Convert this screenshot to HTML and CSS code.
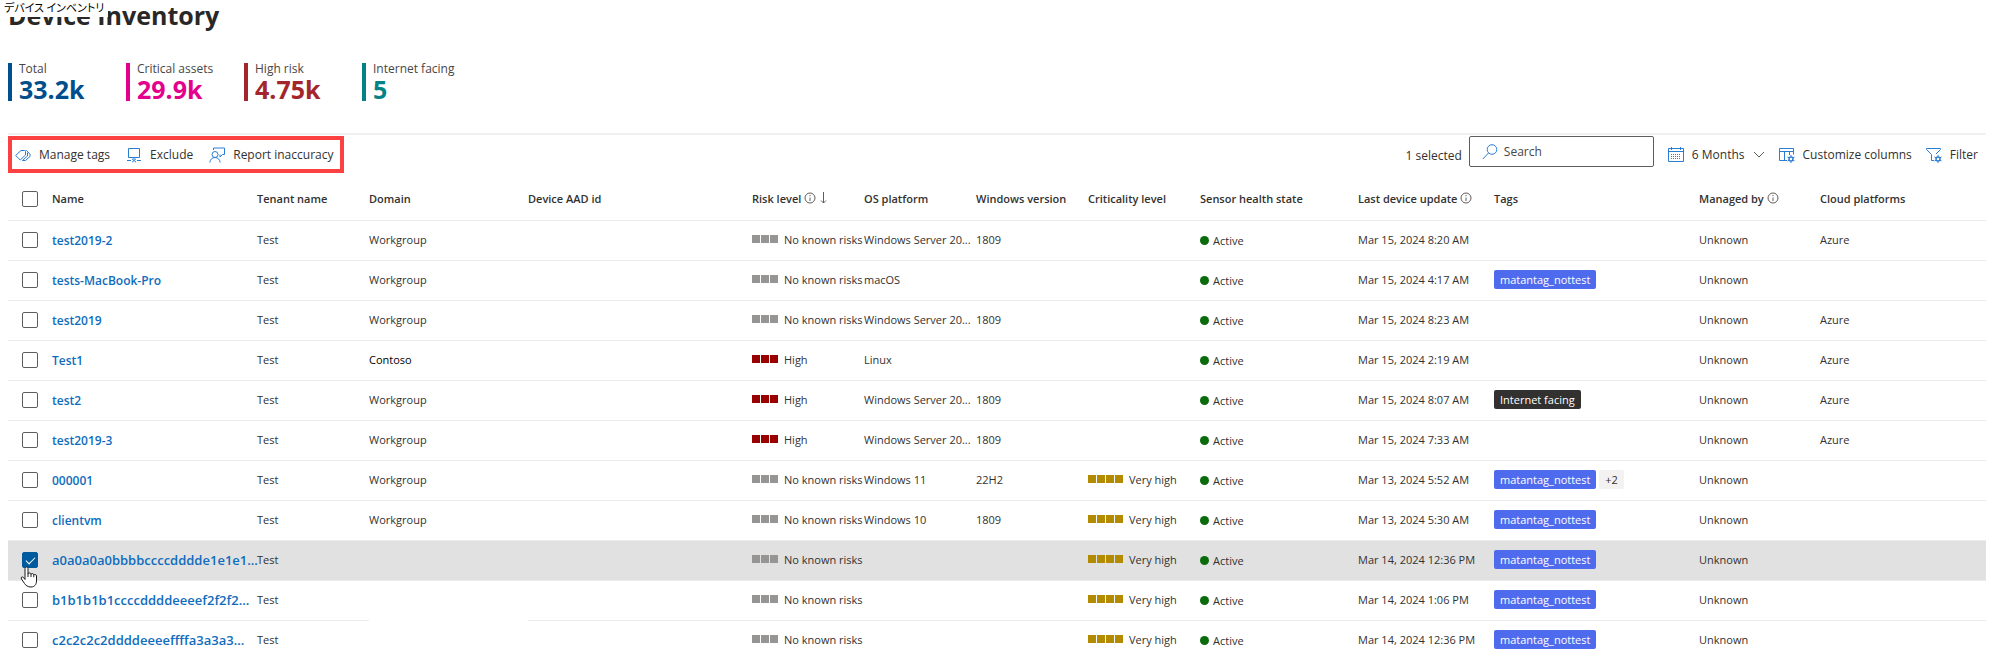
FILE: index.html
```html
<!DOCTYPE html>
<html lang="en">
<head>
    <meta charset="UTF-8">
    <meta name="viewport" content="width=device-width, initial-scale=1.0">
    <title>Device Inventory</title>
    <link rel="stylesheet" href="styles.css">
</head>
<body>
    <svg class="sprite" aria-hidden="true">
        <symbol id="i-info" viewBox="0 0 12 12"><circle cx="6" cy="6" r="5"/><path d="M6 5.500v3.500M6 3v1.200"/></symbol>
        <symbol id="i-gear" viewBox="0 0 8 8"><circle cx="4" cy="4" r="2" stroke-width="1.400"/><path d="M4 0v1.500M4 6.500V8M.5 2l1.500.8M6 5.200l1.500.8M7.500 2 6 2.800M.5 6 2 5.200"/></symbol>
    </svg>

    <main class="page">
        <header class="page-header">
            <h1>Device Inventory</h1>
            <span class="caption" lang="ja">デバイス インベントリ</span>
        </header>

        <section class="stats">
            <div class="stat total"><span class="stat-label">Total</span><span class="stat-number">33.2k</span></div>
            <div class="stat critical"><span class="stat-label">Critical assets</span><span class="stat-number">29.9k</span></div>
            <div class="stat high"><span class="stat-label">High risk</span><span class="stat-number">4.75k</span></div>
            <div class="stat facing"><span class="stat-label">Internet facing</span><span class="stat-number">5</span></div>
        </section>

        <div class="toolbar">
            <div class="actions">
                <button class="tool-btn" type="button">
                    <svg width="16" height="16" viewBox="0 0 16 16"><path d="M.7 8.500 6 3.500h3.500l1 1v3.500L5.200 13z"/><path d="M10.500 3.500h1L15 7.200v2.300L10.500 13.500H7.500L12.500 9V5.500"/></svg>
                    Manage tags
                </button>
                <button class="tool-btn" type="button">
                    <svg width="16" height="16" viewBox="0 0 16 16"><path d="M2.500 1.500h11v9h-11zM8 10.500v2M1 13.500h4M11 13.500h4M6 11.800l4 3.400M10 11.800l-4 3.400"/></svg>
                    Exclude
                </button>
                <button class="tool-btn" type="button">
                    <svg width="16" height="16" viewBox="0 0 16 16"><circle cx="6" cy="7.500" r="3"/><path d="M.8 15.500c.4-3 2.200-5 5.200-5s4.800 2 5.200 5M4.500 3V1h11v6.500h-2L11 10V7.500"/></svg>
                    Report inaccuracy
                </button>
            </div>
            <div class="tools">
                <span class="selected-count">1 selected</span>
                <label class="search">
                    <svg width="16" height="18" viewBox="0 0 16 18"><circle cx="10" cy="6.500" r="4.800"/><path d="M6.500 10 .8 16"/></svg>
                    <input type="text" placeholder="Search" aria-label="Search">
                </label>
                <button class="tool-btn" type="button">
                    <svg width="16" height="16" viewBox="0 0 16 16"><path d="M.5 1.500h15v13H.5zM.5 4.500h15M3.500 0v3M12.500 0v3"/><path class="dots" d="M3 7.500h10M3 9.500h10M3 11.500h10"/></svg>
                    6 Months
                    <svg class="chevron" width="12" height="8" viewBox="0 0 12 8"><path d="M1 1l5 5 5-5"/></svg>
                </button>
                <button class="tool-btn" type="button">
                    <svg width="16" height="16" viewBox="0 0 16 16"><path d="M8 13.500H.5v-12h14v6M.5 4.500h14M5.500 4.500v9M10.500 4.500v3.500"/><use href="#i-gear" x="8" y="8" width="8" height="8"/></svg>
                    Customize columns
                </button>
                <button class="tool-btn" type="button">
                    <svg width="16" height="16" viewBox="0 0 16 16"><path d="M8 13.500H5.500V7.500L.5 2.500v-1h14v1L10 7"/><use href="#i-gear" x="8" y="8" width="8" height="8"/></svg>
                    Filter
                </button>
            </div>
        </div>

        <table class="devices">
            <colgroup>
                <col class="c-check"><col class="c-name"><col class="c-tenant"><col class="c-domain"><col class="c-aad"><col class="c-level"><col class="c-level"><col class="c-level"><col class="c-level"><col class="c-sensor"><col class="c-update"><col class="c-tags"><col class="c-managed"><col>
            </colgroup>
            <thead>
                <tr>
                    <th><input type="checkbox" aria-label="Select all devices"></th>
                    <th>Name</th>
                    <th>Tenant name</th>
                    <th>Domain</th>
                    <th>Device AAD id</th>
                    <th>Risk level <svg class="info" width="12" height="12"><use href="#i-info"/></svg> <svg class="sort" width="8" height="12" viewBox="0 0 8 12"><path d="M4.500 0v11M2 8.500 4.500 11 7 8.500"/></svg></th>
                    <th>OS platform</th>
                    <th>Windows version</th>
                    <th>Criticality level</th>
                    <th>Sensor health state</th>
                    <th>Last device update <svg class="info" width="12" height="12"><use href="#i-info"/></svg></th>
                    <th>Tags</th>
                    <th>Managed by <svg class="info" width="12" height="12"><use href="#i-info"/></svg></th>
                    <th>Cloud platforms</th>
                </tr>
            </thead>
            <tbody>
                <tr>
                    <td><input type="checkbox" aria-label="Select test2019-2"></td>
                    <td><a class="name" href="#">test2019-2</a></td>
                    <td>Test</td>
                    <td>Workgroup</td>
                    <td></td>
                    <td><div class="level"><i></i><i></i><i></i><span>No known risks</span></div></td>
                    <td>Windows Server 20...</td>
                    <td>1809</td>
                    <td></td>
                    <td><div class="status">Active</div></td>
                    <td>Mar 15, 2024 8:20 AM</td>
                    <td></td>
                    <td>Unknown</td>
                    <td>Azure</td>
                </tr>
                <tr>
                    <td><input type="checkbox" aria-label="Select tests-MacBook-Pro"></td>
                    <td><a class="name" href="#">tests-MacBook-Pro</a></td>
                    <td>Test</td>
                    <td>Workgroup</td>
                    <td></td>
                    <td><div class="level"><i></i><i></i><i></i><span>No known risks</span></div></td>
                    <td>macOS</td>
                    <td></td>
                    <td></td>
                    <td><div class="status">Active</div></td>
                    <td>Mar 15, 2024 4:17 AM</td>
                    <td><span class="tag">matantag_nottest</span></td>
                    <td>Unknown</td>
                    <td></td>
                </tr>
                <tr>
                    <td><input type="checkbox" aria-label="Select test2019"></td>
                    <td><a class="name" href="#">test2019</a></td>
                    <td>Test</td>
                    <td>Workgroup</td>
                    <td></td>
                    <td><div class="level"><i></i><i></i><i></i><span>No known risks</span></div></td>
                    <td>Windows Server 20...</td>
                    <td>1809</td>
                    <td></td>
                    <td><div class="status">Active</div></td>
                    <td>Mar 15, 2024 8:23 AM</td>
                    <td></td>
                    <td>Unknown</td>
                    <td>Azure</td>
                </tr>
                <tr>
                    <td><input type="checkbox" aria-label="Select Test1"></td>
                    <td><a class="name" href="#">Test1</a></td>
                    <td>Test</td>
                    <td class="edited">Contoso</td>
                    <td></td>
                    <td><div class="level risk-high"><i></i><i></i><i></i><span>High</span></div></td>
                    <td>Linux</td>
                    <td></td>
                    <td></td>
                    <td><div class="status">Active</div></td>
                    <td>Mar 15, 2024 2:19 AM</td>
                    <td></td>
                    <td>Unknown</td>
                    <td>Azure</td>
                </tr>
                <tr>
                    <td><input type="checkbox" aria-label="Select test2"></td>
                    <td><a class="name" href="#">test2</a></td>
                    <td>Test</td>
                    <td>Workgroup</td>
                    <td></td>
                    <td><div class="level risk-high"><i></i><i></i><i></i><span>High</span></div></td>
                    <td>Windows Server 20...</td>
                    <td>1809</td>
                    <td></td>
                    <td><div class="status">Active</div></td>
                    <td>Mar 15, 2024 8:07 AM</td>
                    <td><span class="tag tag-dark">Internet facing</span></td>
                    <td>Unknown</td>
                    <td>Azure</td>
                </tr>
                <tr>
                    <td><input type="checkbox" aria-label="Select test2019-3"></td>
                    <td><a class="name" href="#">test2019-3</a></td>
                    <td>Test</td>
                    <td>Workgroup</td>
                    <td></td>
                    <td><div class="level risk-high"><i></i><i></i><i></i><span>High</span></div></td>
                    <td>Windows Server 20...</td>
                    <td>1809</td>
                    <td></td>
                    <td><div class="status">Active</div></td>
                    <td>Mar 15, 2024 7:33 AM</td>
                    <td></td>
                    <td>Unknown</td>
                    <td>Azure</td>
                </tr>
                <tr>
                    <td><input type="checkbox" aria-label="Select 000001"></td>
                    <td><a class="name" href="#">000001</a></td>
                    <td>Test</td>
                    <td>Workgroup</td>
                    <td></td>
                    <td><div class="level"><i></i><i></i><i></i><span>No known risks</span></div></td>
                    <td>Windows 11</td>
                    <td>22H2</td>
                    <td><div class="level very-high"><i></i><i></i><i></i><i></i><span>Very high</span></div></td>
                    <td><div class="status">Active</div></td>
                    <td>Mar 13, 2024 5:52 AM</td>
                    <td><span class="tag">matantag_nottest</span> <span class="tag tag-more">+2</span></td>
                    <td>Unknown</td>
                    <td></td>
                </tr>
                <tr>
                    <td><input type="checkbox" aria-label="Select clientvm"></td>
                    <td><a class="name" href="#">clientvm</a></td>
                    <td>Test</td>
                    <td>Workgroup</td>
                    <td></td>
                    <td><div class="level"><i></i><i></i><i></i><span>No known risks</span></div></td>
                    <td>Windows 10</td>
                    <td>1809</td>
                    <td><div class="level very-high"><i></i><i></i><i></i><i></i><span>Very high</span></div></td>
                    <td><div class="status">Active</div></td>
                    <td>Mar 13, 2024 5:30 AM</td>
                    <td><span class="tag">matantag_nottest</span></td>
                    <td>Unknown</td>
                    <td></td>
                </tr>
                <tr class="selected">
                    <td>
                        <input type="checkbox" aria-label="Select a0a0a0a0bbbbccccdddde1e1e1" checked>
                        <svg class="pointer" width="18" height="22" viewBox="0 0 18 22"><path d="M5 13.500V2.500C5 .5 8 .5 8 2.500V8c0-1.500 3-1.500 3 .5 0-1.500 2.800-1.200 2.800.7 0-1.200 2.700-1 2.700.8v5c0 3.500-2 6-5.500 6S6 19.500 4.500 17.500L1.500 13c-1-1.800.8-2.800 2-1.500z"/><path d="M8 8v3M11 8.500V11M13.800 9.200v2"/></svg>
                    </td>
                    <td><a class="name long" href="#">a0a0a0a0bbbbccccdddde1e1e1...</a></td>
                    <td>Test</td>
                    <td></td>
                    <td></td>
                    <td><div class="level"><i></i><i></i><i></i><span>No known risks</span></div></td>
                    <td></td>
                    <td></td>
                    <td><div class="level very-high"><i></i><i></i><i></i><i></i><span>Very high</span></div></td>
                    <td><div class="status">Active</div></td>
                    <td>Mar 14, 2024 12:36 PM</td>
                    <td><span class="tag">matantag_nottest</span></td>
                    <td>Unknown</td>
                    <td></td>
                </tr>
                <tr>
                    <td><input type="checkbox" aria-label="Select b1b1b1b1ccccddddeeeef2f2f2"></td>
                    <td><a class="name long" href="#">b1b1b1b1ccccddddeeeef2f2f2...</a></td>
                    <td>Test</td>
                    <td class="no-line"></td>
                    <td></td>
                    <td><div class="level"><i></i><i></i><i></i><span>No known risks</span></div></td>
                    <td></td>
                    <td></td>
                    <td><div class="level very-high"><i></i><i></i><i></i><i></i><span>Very high</span></div></td>
                    <td><div class="status">Active</div></td>
                    <td>Mar 14, 2024 1:06 PM</td>
                    <td><span class="tag">matantag_nottest</span></td>
                    <td>Unknown</td>
                    <td></td>
                </tr>
                <tr>
                    <td><input type="checkbox" aria-label="Select c2c2c2c2ddddeeeeffffa3a3a3"></td>
                    <td><a class="name long" href="#">c2c2c2c2ddddeeeeffffa3a3a3...</a></td>
                    <td>Test</td>
                    <td></td>
                    <td></td>
                    <td><div class="level"><i></i><i></i><i></i><span>No known risks</span></div></td>
                    <td></td>
                    <td></td>
                    <td><div class="level very-high"><i></i><i></i><i></i><i></i><span>Very high</span></div></td>
                    <td><div class="status">Active</div></td>
                    <td>Mar 14, 2024 12:36 PM</td>
                    <td><span class="tag">matantag_nottest</span></td>
                    <td>Unknown</td>
                    <td></td>
                </tr>
            </tbody>
        </table>
    </main>
</body>
</html>
```

FILE: styles.css
```css
* {
    box-sizing: border-box;
}

body {
    margin: 0;
    background: #fff;
    color: #323130;
    font-family: "Open Sans", "Noto Sans", sans-serif;
    font-size: 12px;
}

svg {
    fill: none;
    stroke: #2b7cd3;
    stroke-width: 1;
    flex: none;
}

.sprite {
    display: none;
}

.page {
    padding: 0 14px 0 8px;
}

.page-header {
    position: relative;
    height: 63px;
}

h1 {
    margin: 0;
    font-size: 25px;
    line-height: 31px;
    font-weight: 700;
    color: #292827;
}

/* translated title laid over the heading */
.caption {
    position: absolute;
    top: 0;
    left: -8px;
    height: 17px;
    padding: 0 4px;
    background: #fff;
    color: #000;
    font-family: "Noto Sans CJK JP", sans-serif;
    font-size: 11px;
    font-feature-settings: "palt";
    line-height: 14px;
}

.stats {
    display: flex;
    height: 70px;
}

.stat {
    display: flex;
    flex-direction: column;
    width: 118px;
    height: 38px;
    padding-left: 7px;
    border-left: 4px solid;
}

.stat-label {
    color: #484644;
    font-size: 12px;
    line-height: 12px;
}

.stat-number {
    font-size: 25px;
    line-height: 28px;
    font-weight: 700;
}

.total {
    color: #004e8c;
}

.critical {
    color: #e3008c;
}

.high {
    color: #a4262c;
}

.facing {
    color: #038387;
}

.toolbar {
    display: flex;
    justify-content: space-between;
    height: 47px;
    padding-top: 1px;
    border-top: 2px solid #f0f0f0;
}

.actions {
    display: flex;
    align-items: center;
    gap: 16px;
    height: 37px;
    padding: 0 7px 0 3px;
    border: 4px solid #fb4141;
}

.tool-btn {
    display: flex;
    align-items: center;
    gap: 8px;
    padding: 0;
    border: 0;
    background: none;
    color: #323130;
    font: inherit;
    line-height: 20px;
    white-space: nowrap;
}

.tools {
    display: flex;
    align-items: center;
    gap: 14px;
    height: 38px;
    padding-right: 8px;
}

.selected-count {
    margin-right: -7px;
}

.search {
    display: flex;
    align-items: center;
    gap: 6px;
    align-self: flex-start;
    width: 185px;
    height: 31px;
    padding-left: 12px;
    border: 1px solid #605e5c;
    border-radius: 2px;
}

.search input {
    width: 100%;
    min-width: 0;
    padding: 0;
    border: 0;
    outline: none;
    background: none;
    font: inherit;
}

.search input::placeholder {
    color: #484644;
}

.chevron,
.info,
.sort {
    stroke: #605e5c;
}

.dots {
    stroke-dasharray: 1 1;
}

.devices {
    width: 100%;
    table-layout: fixed;
    border-collapse: collapse;
    font-size: 11px;
}

.c-check { width: 44px; }
.c-name { width: 205px; }
.c-tenant { width: 112px; }
.c-domain { width: 159px; }
.c-aad { width: 224px; }
.c-level { width: 112px; }
.c-sensor { width: 158px; }
.c-update { width: 136px; }
.c-tags { width: 205px; }
.c-managed { width: 121px; }

th,
td {
    height: 40px;
    padding: 0 0 2px;
    border-bottom: 1px solid #edebe9;
    text-align: left;
    white-space: nowrap;
}

td:nth-child(-n+2) {
    padding-bottom: 0;
}

tr:last-child td,
td.no-line {
    border-bottom: 0;
}

th {
    font-weight: 600;
}

thead th {
    border-bottom: 1px solid #edebe9;
}

th svg {
    vertical-align: -1px;
}

th:first-child,
td:first-child {
    position: relative;
    padding-left: 14px;
}

input[type="checkbox"] {
    appearance: none;
    display: block;
    width: 16px;
    height: 16px;
    margin: 0;
    border: 1px solid #605e5c;
    border-radius: 2px;
    background: #fff;
}

input[type="checkbox"]:checked {
    border-color: #005a9e;
    background: #005a9e;
}

input[type="checkbox"]:checked::after {
    content: "";
    display: block;
    width: 4px;
    height: 8px;
    margin: 2px 0 0 5px;
    border: solid #fff;
    border-width: 0 1px 1px 0;
    transform: rotate(45deg);
}

.pointer {
    position: absolute;
    top: 25px;
    left: 12px;
    z-index: 1;
    fill: #fff;
    stroke: #1b1a19;
}

.name {
    color: #0f6cbd;
    font-size: 12px;
    font-weight: 600;
    text-decoration: none;
}

.name.long {
    font-size: 13px;
}

.edited {
    color: #000;
}

.selected td {
    background: #e1e1e1;
}

.status {
    display: flex;
    align-items: center;
    gap: 4px;
    padding-top: 3px;
}

.status::before {
    content: "";
    width: 9px;
    height: 9px;
    border-radius: 50%;
    background: #0b6a0b;
}

.level {
    display: flex;
    align-items: center;
    gap: 1px;
}

.level i {
    flex: none;
    width: 8px;
    height: 8px;
    background: #979593;
}

.level span {
    margin-left: 5px;
}

.level.risk-high i {
    background: #990000;
}

.level.very-high i {
    background: #b38b00;
}

.tag {
    display: inline-block;
    padding: 0 6px;
    border-radius: 2px;
    background: #4f6bed;
    color: #fff;
    line-height: 19px;
}

.tag-dark {
    background: #323130;
}

.tag-more {
    background: #f3f2f1;
    color: #323130;
}
```
